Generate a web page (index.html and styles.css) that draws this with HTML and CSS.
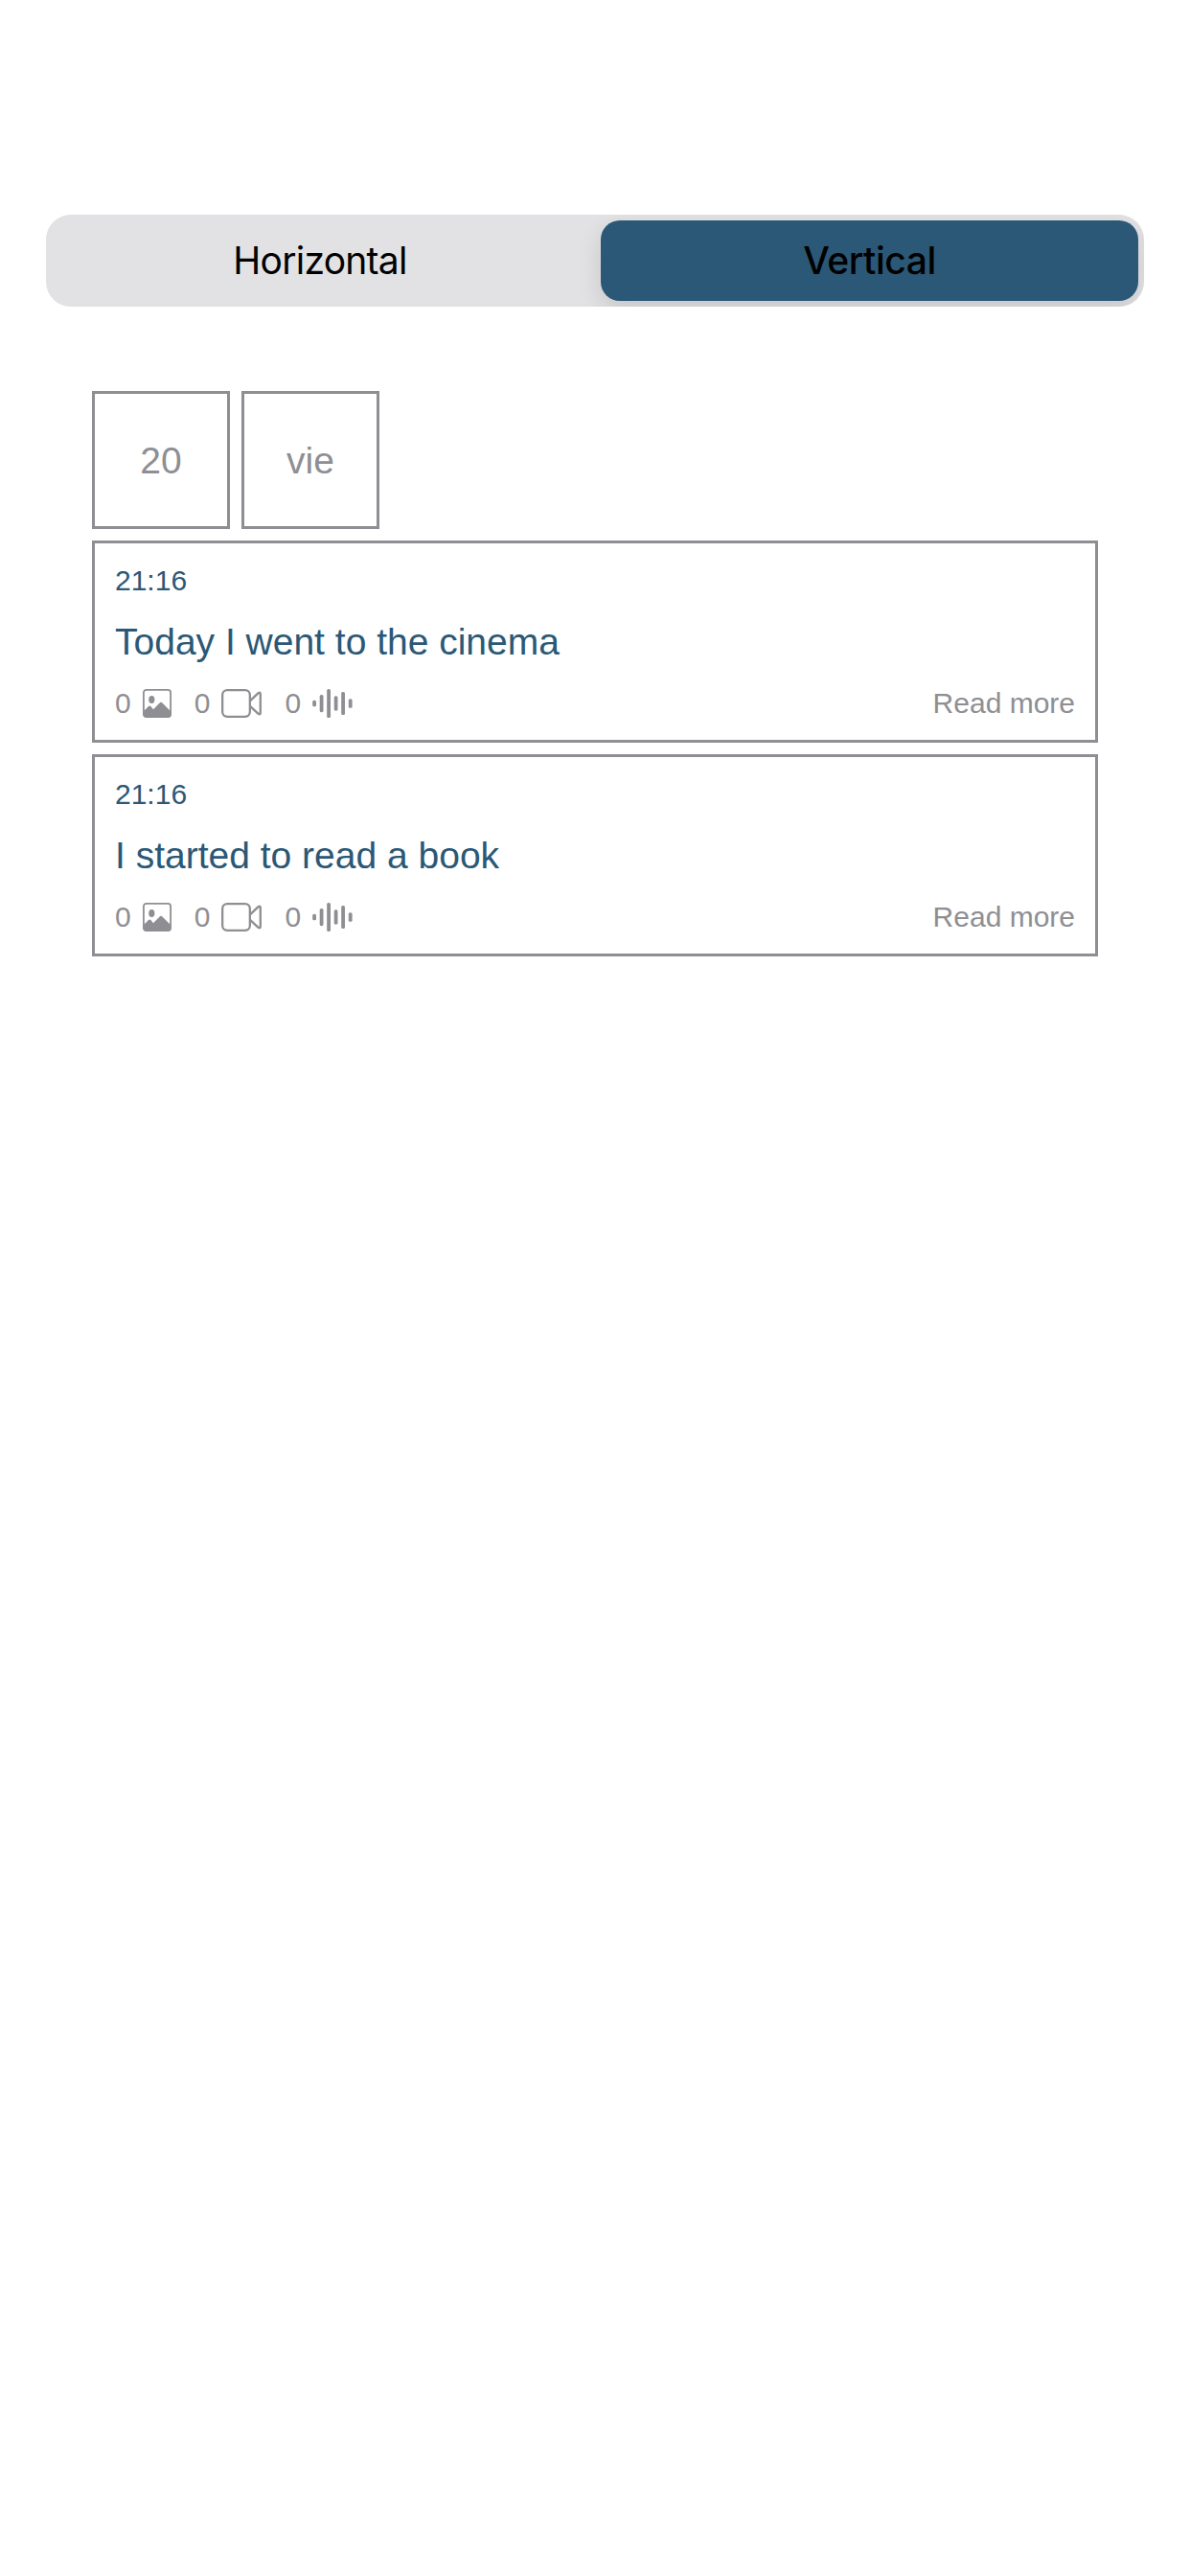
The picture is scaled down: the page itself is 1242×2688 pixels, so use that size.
FILE: index.html
```html
<!DOCTYPE html>
<html lang="en">
<head>
<meta charset="utf-8">
<title>Diary</title>
<link rel="stylesheet" href="styles.css">
</head>
<body>
<svg class="sprite" aria-hidden="true">
  <symbol id="photo" viewBox="0 0 30 30">
    <rect x="0.9" y="0.9" width="28.2" height="28.2" rx="2.8" fill="none" stroke="currentColor" stroke-width="1.8"/>
    <ellipse cx="9.3" cy="11" rx="3.1" ry="3.9" fill="currentColor"/>
    <path d="M0.5 23.5 6 18Q7.2 16.9 8.4 18L11 21.2 17.6 14.4Q19 13.2 20.4 14.4L29.5 23.5V26.5Q29.5 29.5 26.5 29.5H3.5Q0.5 29.5 0.5 26.5Z" fill="currentColor"/>
  </symbol>
  <symbol id="video" viewBox="0 0 42 30">
    <g fill="none" stroke="currentColor" stroke-width="2.3" stroke-linejoin="round">
      <rect x="1.15" y="1.15" width="28.7" height="27.7" rx="5"/>
      <path d="M30 12.4 38.6 4.2Q40.7 3 40.8 5V25Q40.7 27 38.6 25.8L30 17.8"/>
    </g>
  </symbol>
  <symbol id="wave" viewBox="0 0 42 30">
    <g fill="currentColor">
      <rect x="0.2" y="11.7" width="3.8" height="6.6" rx="1.6"/>
      <rect x="7.7" y="5.9" width="3.8" height="18.3" rx="1.6"/>
      <rect x="15.2" y="0" width="3.8" height="30" rx="1.6"/>
      <rect x="22.7" y="7.3" width="3.8" height="15.4" rx="1.6"/>
      <rect x="30.2" y="3" width="3.8" height="24" rx="1.6"/>
      <rect x="37.8" y="10.2" width="3.8" height="9.6" rx="1.6"/>
    </g>
  </symbol>
</svg>
<main class="page">
  <div class="segments">
    <div class="segment">Horizontal</div>
    <div class="segment selected">Vertical</div>
  </div>
  <section class="day">
    <div class="date">
      <div class="tile">20</div>
      <div class="tile">vie</div>
    </div>
    <article class="entry">
      <div class="time">21:16</div>
      <div class="title">Today I went to the cinema</div>
      <div class="meta">
        <span class="count">0<svg class="photo"><use href="#photo"/></svg></span>
        <span class="count">0<svg class="wide"><use href="#video"/></svg></span>
        <span class="count">0<svg class="wide"><use href="#wave"/></svg></span>
        <span class="more">Read more</span>
      </div>
    </article>
    <article class="entry">
      <div class="time">21:16</div>
      <div class="title">I started to read a book</div>
      <div class="meta">
        <span class="count">0<svg class="photo"><use href="#photo"/></svg></span>
        <span class="count">0<svg class="wide"><use href="#video"/></svg></span>
        <span class="count">0<svg class="wide"><use href="#wave"/></svg></span>
        <span class="more">Read more</span>
      </div>
    </article>
  </section>
</main>
</body>
</html>
```
FILE: styles.css
```css
* { box-sizing: border-box; }
body {
  margin: 0;
  background: #fff;
  color: #8e8e93;
  font-family: "Liberation Sans", Arial, sans-serif;
}
.sprite { display: none; }
.page {
  min-height: 2688px;
  padding: 224px 48px 0;
}
.segments {
  display: flex;
  height: 96px;
  padding: 6px;
  border-radius: 26px;
  background: #e2e2e4;
  overflow: hidden;
  color: #000;
  font: 400 39px/84px Inter, sans-serif;
}
.segment {
  width: 573px;
  padding-right: 13px;
  letter-spacing: -0.75px;
  text-align: center;
}
.segment.selected {
  width: 561px;
  padding-right: 0;
  border-radius: 20px;
  background: #2b5876;
  box-shadow: 0 9px 24px rgba(0, 0, 0, 0.12);
  font-weight: 500;
  letter-spacing: -0.45px;
}
.day {
  display: flex;
  flex-direction: column;
  gap: 12px;
  margin: 88px 48px 0;
}
.date {
  display: flex;
  gap: 12px;
}
.tile {
  width: 144px;
  height: 144px;
  border: 3px solid #8e8e93;
  font-size: 39px;
  line-height: 140px;
  text-align: center;
}
.entry {
  display: flex;
  flex-direction: column;
  gap: 22px;
  height: 211px;
  padding: 21px;
  border: 3px solid #8e8e93;
}
.time {
  color: #2b5876;
  font-size: 30px;
  line-height: 36px;
}
.title {
  color: #2b5876;
  font-size: 39px;
  line-height: 48px;
}
.meta {
  display: flex;
  align-items: center;
  gap: 24px;
  font-size: 30px;
  line-height: 36px;
}
.count {
  display: flex;
  align-items: center;
  gap: 12px;
}
.photo { width: 30px; height: 30px; }
.wide { width: 42px; height: 30px; }
.more { margin-left: auto; }
```
